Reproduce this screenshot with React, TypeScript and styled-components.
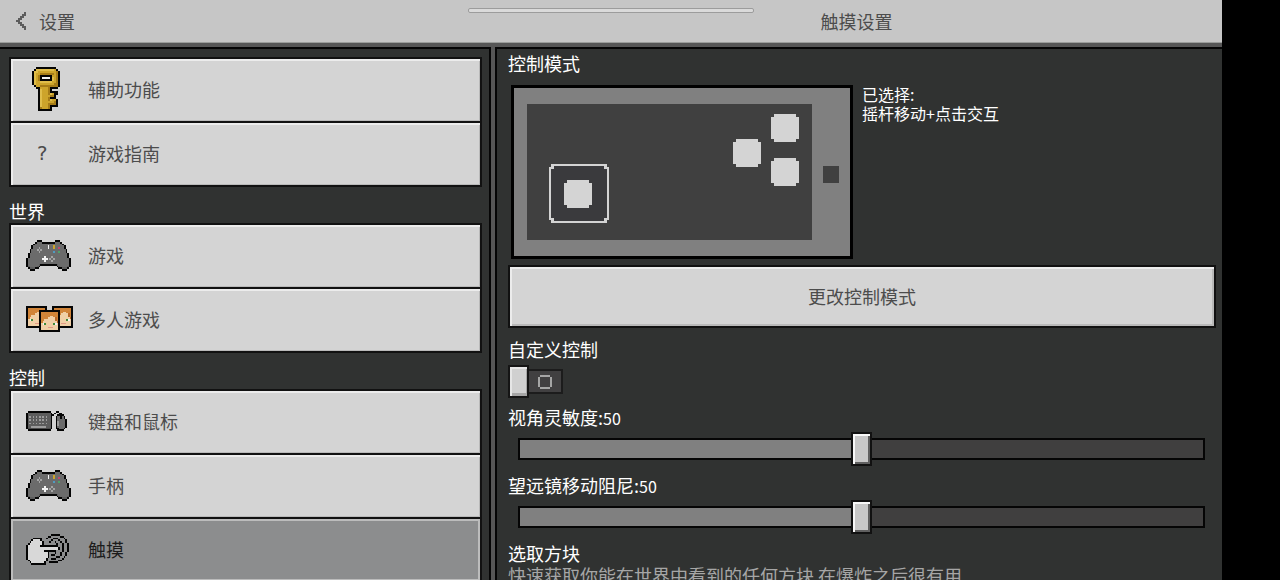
import React, { useId, useState } from "react";
import styled, { createGlobalStyle } from "styled-components";

const GlobalStyle = createGlobalStyle`
  * { box-sizing: border-box; }
  body {
    margin: 0;
    background: #000;
    font-family: "Noto Sans CJK SC", "Noto Sans", sans-serif;
    font-size: 18px;
    line-height: 24px;
  }
  button, input { font: inherit; margin: 0; }
`;

const Screen = styled.div`
  display: flex;
  flex-direction: column;
  height: 100vh;
  margin-right: 58px;
  background: #565656;
  overflow: hidden;
`;

const Header = styled.header`
  position: relative;
  display: flex;
  flex: none;
  align-items: center;
  height: 43px;
  background: #c6c6c6;
  border-bottom: 1px solid #9b9d9b;
  color: #4c4c4c;
`;

const HeaderSide = styled.div`
  flex: none;
  width: 491px;
  padding-left: 16px;
`;

const BackButton = styled.button`
  display: flex;
  align-items: center;
  gap: 13px;
  padding: 0;
  border: 0;
  background: none;
  color: inherit;
`;

const Title = styled.h1`
  flex: 1;
  margin: 0;
  font-size: 18px;
  font-weight: 400;
  text-align: center;
`;

const Grabber = styled.div`
  position: absolute;
  top: 8px;
  left: 50%;
  width: 286px;
  height: 5px;
  transform: translateX(-50%);
  border: 1px solid #9c9c9c;
  border-radius: 2px;
  background: #dadada;
`;

const Body = styled.div`
  display: flex;
  flex: 1;
  gap: 4px;
  min-height: 0;
  padding-top: 4px;
`;

const Sidebar = styled.nav`
  flex: none;
  width: 491px;
  padding: 8px 7px 0 9px;
  border-top: 2px solid #050505;
  border-right: 2px solid #050505;
  background: #303231;
  overflow: hidden;
`;

const GroupTitle = styled.h2`
  margin: 0;
  padding: 14px 0 2px;
  color: #fff;
  font-size: 18px;
  font-weight: 400;
  line-height: 20px;
`;

const Group = styled.div`
  display: flex;
  flex-direction: column;
  gap: 2px;
  padding: 2px;
  background: #111;
`;

const NavItem = styled.button<{ $selected?: boolean }>`
  display: flex;
  align-items: center;
  height: 62px;
  padding: 0 0 2px 13px;
  border: 0;
  background: ${(p) => (p.$selected ? "#8c8d8e" : "#d4d4d4")};
  box-shadow: ${(p) =>
    p.$selected
      ? "inset 2px 2px #bcbcbc, inset -2px -2px #bcbcbc"
      : "inset 2px 2px #ececec, inset -1px -1px #b9b9b9"};
  color: ${(p) => (p.$selected ? "#1c1c1c" : "#4c4c4c")};
  text-align: left;
`;

const IconSlot = styled.span<{ $inset?: number }>`
  display: flex;
  flex: none;
  align-items: center;
  width: 64px;
  padding-left: ${(p) => p.$inset ?? 2}px;
`;

const QuestionMark = styled.span`
  font-family: "DejaVu Sans Mono", monospace;
  font-size: 20px;
`;

const Content = styled.main`
  flex: 1;
  min-width: 0;
  padding: 2px 6px 0 11px;
  border-top: 2px solid #050505;
  border-left: 2px solid #050505;
  background: #303231;
  color: #fff;
  overflow: hidden;
`;

const Heading = styled.h2`
  margin: 0;
  font-size: 18px;
  font-weight: 400;
`;

const ModeRow = styled.div`
  display: flex;
  gap: 9px;
  padding: 10px 0 6px 3px;
`;

const ModeText = styled.p`
  margin: 0;
  font-size: 16px;
  line-height: 19px;
`;

const WideButton = styled.button`
  display: block;
  width: 100%;
  height: 63px;
  padding: 0 0 2px;
  border: 2px solid #111;
  background: #d4d4d4;
  box-shadow: inset 2px 2px #ececec, inset -2px -2px #b9b9b9;
  color: #4c4c4c;
`;

const ToggleField = styled.label`
  display: block;
  padding-top: 9px;
`;

const ToggleRow = styled.span`
  display: flex;
  align-items: center;
  width: 55px;
  height: 33px;
  margin-top: 4px;
`;

const HiddenCheckbox = styled.input`
  position: absolute;
  width: 1px;
  height: 1px;
  opacity: 0;
`;

const ToggleThumb = styled.span`
  flex: none;
  width: 21px;
  height: 33px;
  border: 2px solid #151515;
  background: #d0d0d0;
  box-shadow: inset 2px 2px #e6e6e6, inset -1px -3px #a5a5a5;
`;

const ToggleTrack = styled.span`
  display: flex;
  flex: 1;
  align-items: center;
  justify-content: center;
  height: 25px;
  border: 2px solid #1c1c1c;
  border-left: 0;
  background: #414041;
`;

const SliderField = styled.div`
  display: flex;
  flex-direction: column;
  padding-top: 7px;
`;

const Value = styled.span`
  font-size: 16px;
  line-height: 16px;
`;

const Range = styled.input`
  appearance: none;
  height: 34px;
  margin: 3px 11px 0 10px;
  background: transparent;

  &::-webkit-slider-runnable-track {
    height: 22px;
    border: 2px solid #050505;
    background: linear-gradient(
      to right,
      #808080 ${(p) => Number(p.value)}%,
      #403f3f ${(p) => Number(p.value)}%
    );
  }

  &::-webkit-slider-thumb {
    appearance: none;
    width: 21px;
    height: 34px;
    margin-top: -8px;
    border: 2px solid #111;
    border-radius: 0;
    background: #c8c8c8;
    box-shadow: inset 2px 2px #f8f8f8, inset -2px -2px #606060;
  }
`;

const Description = styled.p`
  margin: 0;
  color: #a6a6a6;
  line-height: 20px;
`;

const palette: Record<string, string> = {
  "#": "#050505",
  g: "#6b6b6b",
  o: "#a5a5a5",
  w: "#f4f4f4",
  l: "#d8d8d8",
  y: "#cda42b",
  Y: "#e0bd4a",
  d: "#a67c18",
  r: "#c2476a",
  b: "#4e9cc4",
  G: "#4fa36a",
  k: "#4a4a4a",
  m: "#9c9c9c",
  c: "#5c5c5c",
  h: "#d18438",
  H: "#b9692a",
  s: "#f0cfa6",
  e: "#3f8a3a",
  p: "#e29a86",
};

function PixelArt({ rows, width, height }: { rows: string[]; width: number; height: number }) {
  const columns = Math.max(...rows.map((row) => row.length));
  return (
    <svg
      width={width}
      height={height}
      viewBox={`0 0 ${columns} ${rows.length}`}
      preserveAspectRatio="none"
      shapeRendering="crispEdges"
      aria-hidden="true"
    >
      {rows.flatMap((row, y) =>
        [...row].map((cell, x) =>
          cell === "." ? null : (
            <rect key={`${x}-${y}`} x={x} y={y} width={1} height={1} fill={palette[cell]} />
          ),
        ),
      )}
    </svg>
  );
}

const keyRows = [
  "..##########..",
  ".#YYYYYYYYYy#.",
  "#YYyyyyyyyyyd#",
  "#Yyydddddddyd#",
  "#Yyd######yyd#",
  "#Yyd#wwww#Yyd#",
  "#Yyd######Yyd#",
  "#YyyYYYYYYyyd#",
  "#Yyyyyyyyyydd#",
  ".#yyddddddddd#",
  "..##yyyyd####.",
  "...#Yyyyd#....",
  "...#Yyyyd####.",
  "...#YyyydYy##.",
  "...#Yyyyydd#..",
  "...#Yyyyd###..",
  "...#YyyydYyy#.",
  "...#Yyyyyyyd#.",
  "...#Yyyydddd#.",
  "...#Yyyyd####.",
  "...#dyyyd#....",
  "...#######....",
];

const gamepadRows = [
  "......###.......###......",
  ".....#ggg#######ggg#.....",
  "....#ggggggggggggggg#....",
  "...#ggggggggwggyggggg#...",
  "...#gggoggggwggyggrgg#...",
  "..#gggogoggggggggggggg#..",
  "..#ggggogggggggbggGggg#..",
  ".#ggggggggggggggggggggg#.",
  ".#ggggggggggggggggggggg#.",
  ".#ggggggggwgggogggggggg#.",
  "#ggggggggwwwgogogggggggg#",
  "#gggggggggwgggoggggggggg#",
  "#ggggggggggggggggggggggg#",
  "#ggggggc#########cgggggg#",
  "#cggggc#.........#cggggc#",
  ".#ccc##...........##ccc#.",
  "..###...............###..",
];

const keyboardRows = [
  ".##############...##....",
  "#cccccccccccccc#.#..##..",
  "#cccccccccccccc##..####.",
  "#cmcmcmcmcmcmcc#..#gg#g#",
  "#cccccccccccccc#..#gg#g#",
  "#cmcmcmcmcmcmcc#..#ggggg#",
  "#cccccccccccccc#..#mgggg#",
  "#cmcmcmcmcmcmcc#..#mgggg#",
  "#cccccccccccccc#..#mgggg#",
  "#ccmmmmmmmmmccc#..#ggggg#",
  "#kkkkkkkkkkkkkk#..##ggg#.",
  ".##############....####..",
];

const touchRows = [
  "..............#####.....",
  "............##.....##...",
  "....#####..#...###...#..",
  "...#llll#.....#...#...#.",
  "..#llllll#...#..#..#..#.",
  ".#lllllll#.......#..#..#",
  "#lllllll##########..#..#",
  "#lllllllllllllllll#.#..#",
  "#lllllllllllllllll#.#..#",
  "#lllllllll#######...#..#",
  "#lllllllllll#...#..#..#.",
  "#lllllllllll#.##...#..#.",
  "#lllllllllll#....##..#..",
  "#llllllllll#..###...#...",
  ".#lllllllll#......##....",
  "..#lllllll#..#####......",
  "...########.............",
];

const faceRows = [
  "############",
  "#hhhhhhhhhh#",
  "#hhhhhhhhhh#",
  "#hhhhhsshhh#",
  "#hhhhssssHh#",
  "#hhssssssHh#",
  "#hssssssssH#",
  "#swessssews#",
  "#ssssssssss#",
  "#sssspppsss#",
  "#ssssssssss#",
  "############",
];

const chevronRows = [
  "....c",
  "...cc",
  "..cc.",
  ".cc..",
  "cc...",
  ".cc..",
  "..cc.",
  "...cc",
  "....c",
];

const KeyIcon = () => <PixelArt rows={keyRows} width={28} height={44} />;
const GamepadIcon = () => <PixelArt rows={gamepadRows} width={45} height={31} />;
const KeyboardIcon = () => <PixelArt rows={keyboardRows} width={41} height={20} />;
const TouchIcon = () => <PixelArt rows={touchRows} width={43} height={31} />;

function PlayersIcon() {
  const faces = [
    [0, 0],
    [26, 0],
    [13, 4],
  ];
  return (
    <svg width={47} height={26} viewBox="0 0 47 26" aria-hidden="true">
      {faces.map(([x, y]) => (
        <g key={x} transform={`translate(${x} ${y})`}>
          <PixelArt rows={faceRows} width={21} height={22} />
        </g>
      ))}
    </svg>
  );
}

function RoundedTile({ x, y }: { x: number; y: number }) {
  return (
    <path
      d={`M${x + 3} ${y}h22v3h3v22h-3v3h-22v-3h-3v-22h3z`}
      fill="#d4d4d4"
    />
  );
}

function ControlPreview() {
  return (
    <svg
      width={342}
      height={174}
      viewBox="0 0 342 174"
      shapeRendering="crispEdges"
      role="img"
      aria-label="摇杆移动+点击交互"
    >
      <rect width={342} height={174} fill="#000" />
      <rect x={3} y={3} width={336} height={168} fill="#808080" />
      <rect x={16} y={19} width={285} height={136} fill="#404040" />
      <path d="M40 79h56v3h2v53h-2v3h-56v-3h-2v-53h2z" fill="#d4d4d4" />
      <path d="M43 81h50v3h3v49h-3v3h-50v-3h-3v-49h3z" fill="#3a3a3d" />
      <RoundedTile x={53} y={95} />
      <RoundedTile x={260} y={29} />
      <RoundedTile x={222} y={54} />
      <RoundedTile x={260} y={73} />
      <rect x={312} y={81} width={16} height={17} fill="#404040" />
    </svg>
  );
}

function Slider({ label }: { label: string }) {
  const id = useId();
  const [value, setValue] = useState(50);
  return (
    <SliderField>
      <label htmlFor={id}>
        {label}:<Value>{value}</Value>
      </label>
      <Range
        id={id}
        type="range"
        min={0}
        max={100}
        value={value}
        onChange={(event) => setValue(Number(event.target.value))}
      />
    </SliderField>
  );
}

export default function App() {
  return (
    <>
      <GlobalStyle />
      <Screen>
        <Header>
          <HeaderSide>
            <BackButton type="button">
              <PixelArt rows={chevronRows} width={10} height={18} />
              设置
            </BackButton>
          </HeaderSide>
          <Title>触摸设置</Title>
          <Grabber />
        </Header>
        <Body>
          <Sidebar>
            <Group>
              <NavItem type="button">
                <IconSlot $inset={8}>
                  <KeyIcon />
                </IconSlot>
                辅助功能
              </NavItem>
              <NavItem type="button">
                <IconSlot $inset={12}>
                  <QuestionMark>?</QuestionMark>
                </IconSlot>
                游戏指南
              </NavItem>
            </Group>
            <GroupTitle>世界</GroupTitle>
            <Group>
              <NavItem type="button">
                <IconSlot>
                  <GamepadIcon />
                </IconSlot>
                游戏
              </NavItem>
              <NavItem type="button">
                <IconSlot>
                  <PlayersIcon />
                </IconSlot>
                多人游戏
              </NavItem>
            </Group>
            <GroupTitle>控制</GroupTitle>
            <Group>
              <NavItem type="button">
                <IconSlot>
                  <KeyboardIcon />
                </IconSlot>
                键盘和鼠标
              </NavItem>
              <NavItem type="button">
                <IconSlot>
                  <GamepadIcon />
                </IconSlot>
                手柄
              </NavItem>
              <NavItem type="button" $selected aria-current="page">
                <IconSlot>
                  <TouchIcon />
                </IconSlot>
                触摸
              </NavItem>
            </Group>
          </Sidebar>
          <Content>
            <Heading>控制模式</Heading>
            <ModeRow>
              <ControlPreview />
              <ModeText>
                已选择:
                <br />
                摇杆移动+点击交互
              </ModeText>
            </ModeRow>
            <WideButton type="button">更改控制模式</WideButton>
            <ToggleField>
              自定义控制
              <HiddenCheckbox type="checkbox" />
              <ToggleRow>
                <ToggleThumb />
                <ToggleTrack>
                  <svg
                    width={14}
                    height={14}
                    viewBox="0 0 14 14"
                    shapeRendering="crispEdges"
                    aria-hidden="true"
                  >
                    <path
                      d="M2 1h10M2 13h10M1 2v10M13 2v10"
                      stroke="#a6a6a6"
                      strokeWidth={2}
                    />
                  </svg>
                </ToggleTrack>
              </ToggleRow>
            </ToggleField>
            <Slider label="视角灵敏度" />
            <Slider label="望远镜移动阻尼" />
            <SliderField>
              <Heading>选取方块</Heading>
              <Description>快速获取你能在世界中看到的任何方块 在爆炸之后很有用</Description>
            </SliderField>
          </Content>
        </Body>
      </Screen>
    </>
  );
}
